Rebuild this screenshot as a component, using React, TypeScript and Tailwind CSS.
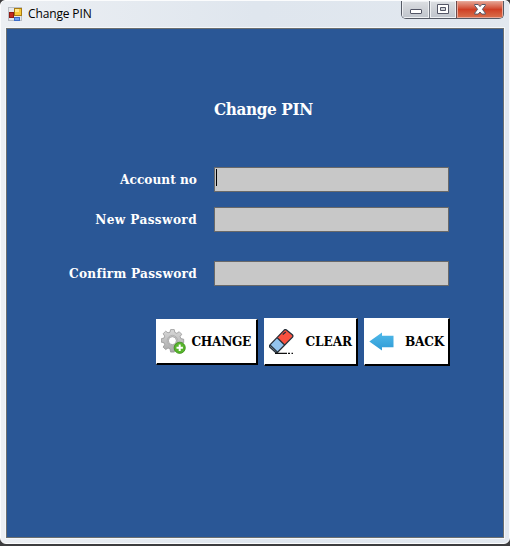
import React from "react";

const serif = "font-['DejaVu_Serif_Condensed','DejaVu_Serif',serif] font-bold font-stretch-condensed whitespace-nowrap";

function FormIcon() {
  return (
    <svg width="14" height="14" viewBox="0 0 14 14" shapeRendering="crispEdges">
      <rect x="0.5" y="0.5" width="13" height="13" fill="#e4e7eb" stroke="#b9bec5" />
      <rect x="1" y="5" width="4" height="5" fill="#c22a1f" stroke="#8e1a14" />
      <rect x="6" y="1" width="7" height="7" fill="#f7c93a" stroke="#a87b12" />
      <rect x="7" y="2" width="4" height="3" fill="#ffe68a" />
      <rect x="6" y="10" width="5" height="3" fill="#6ea0ee" stroke="#3c6cc9" />
    </svg>
  );
}

function TitleBar() {
  return (
    <header className="flex h-[27px] w-full items-start justify-between">
      <div className="flex items-center gap-[6px] pt-[6px] pl-[7px]">
        <FormIcon />
        <span className="block w-[64px] font-['Open_Sans','Noto_Sans',sans-serif] text-[12px] leading-[14px] tracking-[-0.14px] whitespace-nowrap text-black">
          Change PIN
        </span>
      </div>
      <div className="mr-[5px] flex h-[18px] w-[103px] overflow-hidden rounded-b-[5px] border border-t-0 border-[#555a65]">
        <div className="flex w-[28px] items-end justify-center border-r border-[#757a84] bg-linear-to-b from-[#dcdfe3] via-[#cfd2d7] via-45% to-[#bfc4cc] pb-[4px] shadow-[inset_0_0_0_1px_#eef0f3]">
          <svg width="12" height="5" viewBox="0 0 12 5">
            <rect x="0.5" y="0.5" width="11" height="4" rx="0.5" fill="#fff" stroke="#535666" />
          </svg>
        </div>
        <div className="flex w-[27px] justify-center border-r border-[#6b4b4c] bg-linear-to-b from-[#dcdfe3] via-[#cfd2d7] via-45% to-[#bfc4cc] pt-[3px] shadow-[inset_0_0_0_1px_#eef0f3]">
          <svg width="12" height="10" viewBox="0 0 12 10">
            <path fillRule="evenodd" d="M.5.5h11v9H.5zM3.5 3.5h5v3h-5z" fill="#fff" stroke="#535666" />
          </svg>
        </div>
        <div className="flex flex-1 justify-center bg-linear-to-b from-[#e3a595] via-[#cf3f24] via-50% to-[#d9704c] pt-[3px] shadow-[inset_0_0_0_1px_#e9a797]">
          <svg width="12" height="11" viewBox="0 0 12 11">
            <path d="M.7.5h3.5L6 2.6 7.8.5h3.5v1L8.4 5.3l2.9 3.8v1H7.8L6 8l-1.8 2.1H.7v-1l2.9-3.8L.7 1.5z" fill="#fff" stroke="#535666" />
          </svg>
        </div>
      </div>
    </header>
  );
}

function Field({ label, caret, className, text }: { label: string; caret?: boolean; className?: string; text: string }) {
  return (
    <div className={"flex h-[25px] items-center " + (className ?? "")}>
      <div className="flex w-[190px] justify-end pb-px">
        <span className={serif + " text-[13.5px] leading-[24px] text-white " + text}>{label}</span>
      </div>
      <div className="ml-[17px] flex h-[25px] w-[235px] border border-[#696969] bg-[#c8c8c8] pt-px pl-px">
        {caret && <span className="h-[17px] w-px bg-black" />}
      </div>
    </div>
  );
}

function GearIcon() {
  return (
    <svg width="25" height="25" viewBox="0 0 25 25">
      <defs>
        <linearGradient id="gear" x1="0" y1="0" x2="0" y2="1">
          <stop offset="0" stopColor="#d8d8d8" />
          <stop offset="1" stopColor="#a8a8a8" />
        </linearGradient>
      </defs>
      <path
        fillRule="evenodd"
        d="M9.6.6h3.7l.5 2.8 2 .9 2.4-1.6 2.5 2.5-1.6 2.4.8 2 2.8.6v3.5l-2.8.5-.8 2 1.6 2.4-2.5 2.5-2.4-1.6-2 .8-.5 2.8H9.6L9 19.8l-2-.8-2.3 1.6-2.6-2.5 1.6-2.4-.8-2-2.6-.5V9.7l2.6-.6.8-2-1.6-2.4 2.6-2.5L7 3.8l2-.6zM11.4 7.7a4 4 0 1 0 0 8 4 4 0 0 0 0-8z"
        fill="url(#gear)"
        stroke="#8c8c8c"
        strokeWidth="0.7"
      />
      <circle cx="11.4" cy="11.7" r="5.3" fill="none" stroke="#b2b2b2" strokeWidth="1" />
      <circle cx="18.7" cy="18.8" r="5.6" fill="#58b52c" stroke="#388d18" strokeWidth="0.8" />
      <path d="M18.7 15.6v6.4M15.5 18.8h6.4" stroke="#fff" strokeWidth="2" />
    </svg>
  );
}

function EraserIcon() {
  return (
    <svg width="25" height="25" viewBox="0 0 25 25">
      <path d="M15.2 1.1c.9-.8 1.5-.8 2.3 0l5.8 4.6c.8.8.8 1.5.2 2.4L8.6 23.3c-.7.7-1.4.7-2.1 0L1 18.3c-.7-.8-.7-1.6 0-2.4z" fill="#f9513f" />
      <path d="M8.2 8.8l7.2 7L8.6 23.3c-.7.7-1.4.7-2.1 0L1 18.3c-.7-.8-.7-1.6 0-2.4z" fill="#93c4ee" />
      <path d="M1 16l7.2 7-1.4.6L1 18.3z" fill="#cfe6fa" />
      <path d="M15.2 1.1c.9-.8 1.5-.8 2.3 0l5.8 4.6c.8.8.8 1.5.2 2.4L8.6 23.3c-.7.7-1.4.7-2.1 0L1 18.3c-.7-.8-.7-1.6 0-2.4zM8.2 8.8l7.2 7M1 16l7.2 6.9M13.7 5.6l3-2.7" fill="none" stroke="#26303a" strokeWidth="1.3" />
      <path d="M6 24.3h12M19 24.3h2M22.5 24.3h1.5" stroke="#111" strokeWidth="1.2" />
    </svg>
  );
}

function ArrowIcon() {
  return (
    <svg width="25" height="19" viewBox="0 0 25 19">
      <defs>
        <linearGradient id="arrow" x1="0" y1="0" x2="0" y2="1">
          <stop offset="0" stopColor="#50b9e9" />
          <stop offset="1" stopColor="#2f9bd6" />
        </linearGradient>
      </defs>
      <path d="M.3 9.5L13 .4v3.3h11.5v11.5H13v3.3z" fill="url(#arrow)" />
    </svg>
  );
}

const button =
  "flex shrink-0 items-center justify-between border-t border-l border-r-2 border-b-2 border-t-white border-l-white border-r-black border-b-black bg-white text-[13.5px] leading-[20px] text-black";

export default function App() {
  return (
    <div className="h-[546px] w-[510px] overflow-hidden bg-[#3d3d3f] pb-[2px]">
      <div className="flex h-[544px] w-[510px] flex-col overflow-hidden rounded-t-[5px] rounded-b-[6px] border border-[#fbfcfd] bg-linear-to-r from-[#eceff3] via-[#dfe6ee] to-[#e2e8ef]">
        <TitleBar />
        <main className="ml-[5px] flex h-[510px] w-[498px] shrink-0 flex-col border border-[#6b6f70] bg-[#2a5796] shadow-[0_0_0_1px_#f4f7fa]">
          <h1 className={serif + " mt-[68px] ml-[207px] w-[99px] text-[17px] leading-[24px] tracking-[-0.4px] text-white"}>Change PIN</h1>
          <Field label="Account no" caret className="mt-[46px]" text="tracking-[0.02px]" />
          <Field label="New Password" className="mt-[15px]" text="tracking-[0.37px]" />
          <Field label="Confirm Password" className="mt-[29px]" text="tracking-[0.27px]" />
          <div className="mt-[32px] ml-[149px] flex items-center gap-[6px]">
            <button className={serif + " " + button + " h-[46px] w-[102px] pr-[5px] pl-[4px]"}>
              <GearIcon />
              <span className="pb-[2px] tracking-[-0.3px]">CHANGE</span>
            </button>
            <button className={serif + " " + button + " h-[48px] w-[94px] pr-[4px] pl-[4px]"}>
              <EraserIcon />
              <span className="pb-[2px] tracking-[-0.1px]">CLEAR</span>
            </button>
            <button className={serif + " " + button + " h-[48px] w-[86px] pr-[4px] pl-[4px]"}>
              <ArrowIcon />
              <span className="pb-[2px] tracking-[-0.2px]">BACK</span>
            </button>
          </div>
        </main>
      </div>
    </div>
  );
}
